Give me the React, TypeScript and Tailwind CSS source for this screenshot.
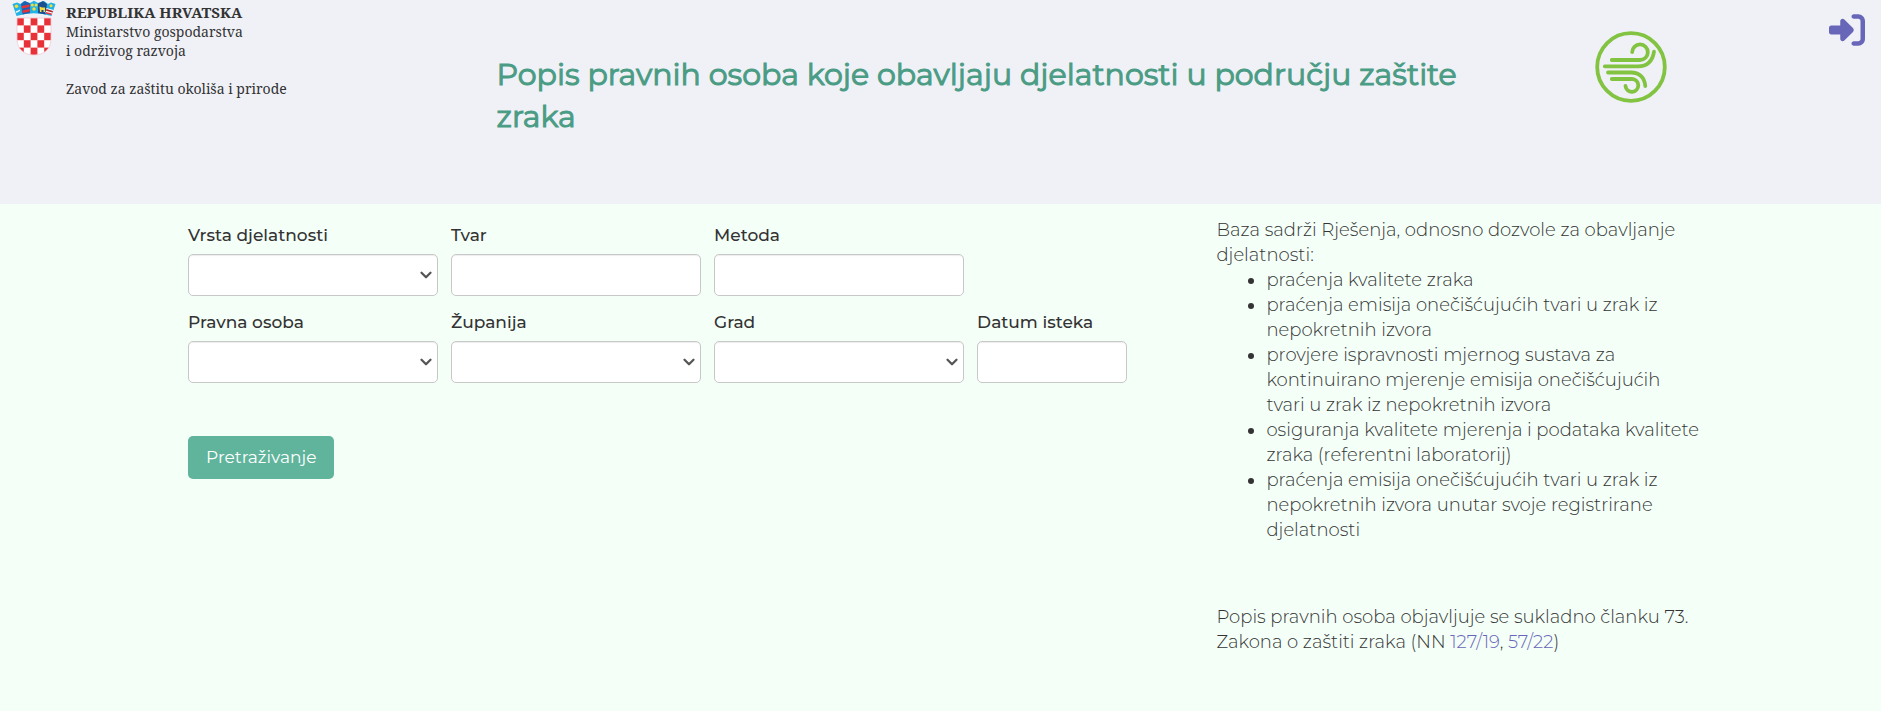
import type { ReactNode } from "react";
import { ChevronDown } from "lucide-react";
import { FaRightToBracket } from "react-icons/fa6";

const ACTIVITIES = [
  "praćenja kvalitete zraka",
  "praćenja emisija onečišćujućih tvari u zrak iz nepokretnih izvora",
  "provjere ispravnosti mjernog sustava za kontinuirano mjerenje emisija onečišćujućih tvari u zrak iz nepokretnih izvora",
  "osiguranja kvalitete mjerenja i podataka kvalitete zraka (referentni laboratorij)",
  "praćenja emisija onečišćujućih tvari u zrak iz nepokretnih izvora unutar svoje registrirane djelatnosti",
];

function CoatOfArms() {
  const squares = [];
  for (let row = 0; row < 5; row++) {
    for (let col = 0; col < 5; col++) {
      if ((row + col) % 2 === 0) {
        squares.push(
          <rect key={`${row}-${col}`} x={17 + col * 6.8} y={18 + row * 7.4} width="6.8" height="7.4" fill="#e8323a" />
        );
      }
    }
  }

  return (
    <svg viewBox="10 0 48 57" className="h-[57px] w-12 shrink-0" aria-hidden="true">
      <clipPath id="shield">
        <path d="M17 18H51V39C51 49 44 55 34 55S17 49 17 39Z" />
      </clipPath>
      <g clipPath="url(#shield)">
        <rect x="17" y="18" width="34" height="37" fill="#fff" />
        {squares}
      </g>
      <path d="M17 18H51V39C51 49 44 55 34 55S17 49 17 39Z" fill="none" stroke="#f3c9cf" strokeWidth="0.8" />
      {/* Crown */}
      <path d="M12.5 4L17 2.500L20.500 4L24 1L30 3L34 .8L38 3L44 1L48 4L51 2.500L55.500 4L51.500 16Q34 10.500 16.500 16Z" fill="#22b2e6" />
      <path d="M21 4L25 1L30 3.500V13L22.500 14.500Z" fill="#1f5fb0" />
      <path d="M21.500 6L29.500 4.500V7L22 8.500ZM22.300 10.500L29.800 9V11.500L22.800 13Z" fill="#e8323a" />
      <path d="M38 3.500L43 1L47 4L45.500 14.500L38 13Z" fill="#1b4f8f" />
      <path d="M39.500 6.500L42 7.500H45V12H43.500V10H41.500V12H40Z" fill="#f4dc3c" />
      <circle cx="16.500" cy="6.300" r="1.800" fill="#f4dc3c" />
      <path d="M15.500 11.500L20 9.500V11L16.500 13Z" fill="#e9f3f7" />
      <circle cx="32.300" cy="5" r="1.500" fill="#f4dc3c" />
      <circle cx="36" cy="5" r="1.500" fill="#f4dc3c" />
      <circle cx="34" cy="9" r="1.700" fill="#f4dc3c" />
      <circle cx="51" cy="5.800" r="1.500" fill="#f4dc3c" />
      <path d="M46.500 8L53.500 10L52 14.500L45.500 13Z" fill="#fff" />
      <path d="M46.500 9L53 11L52.500 12.500L46 10.800Z" fill="#b5262c" />
      <path d="M46 12L52 13.500L51.500 15L45.800 13.500Z" fill="#e8323a" />
    </svg>
  );
}

function WindLogo() {
  return (
    <svg
      viewBox="0 0 72 72"
      className="size-[72px]"
      fill="none"
      stroke="#82c341"
      strokeWidth="3.8"
      strokeLinecap="round"
      role="img"
      aria-label="Zrak"
    >
      <circle cx="36" cy="36" r="33.8" />
      <path d="M16.800 29H45A7.800 7.800 0 1 0 37.200 21" />
      <path d="M9.800 35.300H43C52 35.300 57.500 30 59 20.700" />
      <path d="M13 41.500H36C44 41.500 49.500 46 50.300 55" />
      <path d="M16.800 48H37A6.400 6.400 0 1 1 30.500 55" />
    </svg>
  );
}

interface FieldProps {
  id: string;
  label: string;
  className?: string;
  children: ReactNode;
}

function Field({ id, label, className = "w-[250px]", children }: FieldProps) {
  return (
    <div className={className}>
      <label htmlFor={id} className="mb-[5px] block text-[17px] leading-[27px] font-medium">
        {label}
      </label>
      {children}
    </div>
  );
}

const controlClass =
  "block h-[42px] w-full rounded-[5px] border border-[#c8c8c8] bg-white px-2 text-[17px] text-[#555] shadow-[inset_0_1px_1px_rgba(0,0,0,0.075)] focus:border-[#60b49c] focus:outline-none";

function TextField({ id, label, className }: Omit<FieldProps, "children">) {
  return (
    <Field id={id} label={label} className={className}>
      <input id={id} name={id} type="text" className={controlClass} />
    </Field>
  );
}

function SelectField({ id, label }: Omit<FieldProps, "children">) {
  return (
    <Field id={id} label={label}>
      <div className="relative">
        <select id={id} name={id} className={`${controlClass} appearance-none`}>
          <option value=""></option>
        </select>
        <ChevronDown
          className="pointer-events-none absolute top-3 right-[3px] size-[18px] text-[#555]"
          strokeWidth={3}
        />
      </div>
    </Field>
  );
}

export default function App() {
  return (
    <div className="min-h-screen bg-[#f4fff8] font-['Montserrat','Inter',sans-serif] text-[#333]">
      <header className="grid min-h-[204px] grid-cols-[26.4%_1fr_15.2%] bg-[#f0f1f7]">
        <div className="flex items-start gap-2 pl-2.5">
          <CoatOfArms />
          <div className="pt-[3px] font-['Noto_Serif','Liberation_Serif',serif] text-[14px] leading-[19px]">
            <p className="text-[15px] font-bold">REPUBLIKA HRVATSKA</p>
            <p>Ministarstvo gospodarstva</p>
            <p>i održivog razvoja</p>
            <p className="mt-[19px]">Zavod za zaštitu okoliša i prirode</p>
          </div>
        </div>

        <h1 className="max-w-[1010px] pt-[54px] text-[30px] leading-[42px] font-normal text-[#4a9c84] [-webkit-text-stroke:1px_#4a9c84]">
          Popis pravnih osoba koje obavljaju djelatnosti u području zaštite zraka
        </h1>

        <div className="flex items-start justify-between pr-4">
          <div className="pt-[31px]">
            <WindLogo />
          </div>
          <a href="#prijava" aria-label="Prijava" className="pt-3 text-[#6866b8]">
            <FaRightToBracket className="size-9" />
          </a>
        </div>
      </header>

      <main className="flex justify-between gap-8 pt-[14px] pr-[9.6%] pl-[10%]">
        <form onSubmit={(e) => e.preventDefault()} className="pt-1">
          <div className="flex flex-wrap gap-[13px]">
            <SelectField id="vrsta" label="Vrsta djelatnosti" />
            <TextField id="tvar" label="Tvar" />
            <TextField id="metoda" label="Metoda" />
          </div>
          <div className="mt-[13px] flex flex-wrap gap-[13px]">
            <SelectField id="osoba" label="Pravna osoba" />
            <SelectField id="zupanija" label="Županija" />
            <SelectField id="grad" label="Grad" />
            <TextField id="datum" label="Datum isteka" className="w-[150px]" />
          </div>
          <button
            type="submit"
            className="mt-[53px] h-[43px] rounded-[5px] bg-[#60b49c] px-[18px] text-[17px] text-white hover:bg-[#4a9c84]"
          >
            Pretraživanje
          </button>
        </form>

        <aside className="w-[484px] shrink-0 text-[18px] leading-[25px] font-light">
          <p>Baza sadrži Rješenja, odnosno dozvole za obavljanje djelatnosti:</p>
          <ul className="list-disc pl-[50px]">
            {ACTIVITIES.map((a) => (
              <li key={a}>{a}</li>
            ))}
          </ul>
          <p className="mt-[62px]">
            Popis pravnih osoba objavljuje se sukladno članku 73. Zakona o zaštiti zraka (NN{" "}
            <a href="#nn-127-19" className="text-[#6866b8] hover:underline">127/19</a>,{" "}
            <a href="#nn-57-22" className="text-[#6866b8] hover:underline">57/22</a>)
          </p>
        </aside>
      </main>
    </div>
  );
}
